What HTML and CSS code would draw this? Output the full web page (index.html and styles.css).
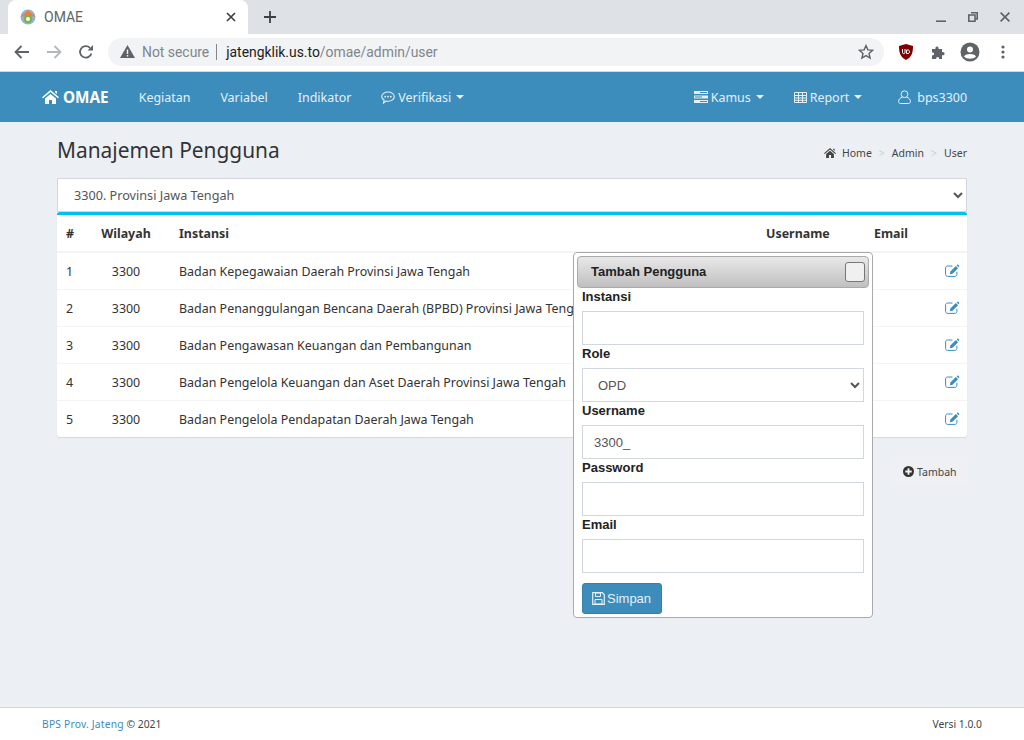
FILE: index.html
```html
<!DOCTYPE html>
<html lang="en">
<head>
    <meta charset="UTF-8">
    <meta name="viewport" content="width=device-width, initial-scale=1.0">
    <title>OMAE</title>
    <link rel="stylesheet" href="styles.css">
</head>
<body>
    <svg class="defs" width="0" height="0">
        <symbol id="i-edit" viewBox="0 0 15 13">
            <path d="M7.500 2H2.600C1.500 2 .6 2.800.6 3.900v6.500c0 1.100.9 2 2 2h7.300c1.100 0 2-.9 2-2V7.800" fill="none" stroke="currentColor" stroke-width="1"/>
            <path d="M5.400 7.600 10.900 2l2.200 2.200-5.600 5.500-2.700.6z" fill="currentColor"/>
            <path d="M11.600 1.300l.7-.6c.3-.2.600-.2.900 0l1 1c.2.300.2.600 0 .9l-.7.700z" fill="currentColor"/>
        </symbol>
        <symbol id="i-caret" viewBox="0 0 8 4">
            <path d="M0 0h8L4 4z" fill="currentColor"/>
        </symbol>
    </svg>

    <div class="tabstrip">
        <div class="tab">
            <svg class="favicon" width="16" height="16" viewBox="0 0 16 16">
                <circle cx="8" cy="8" r="7.500" fill="#8db4d8"/>
                <path d="M8 1 15 7.500H1z" fill="#e8813a"/>
                <circle cx="8" cy="10" r="4" fill="#7cb342"/>
                <circle cx="8" cy="10" r="2" fill="#fff"/>
            </svg>
            <span class="tab-title">OMAE</span>
            <svg class="tab-close" width="10" height="10" viewBox="0 0 10 10"><path d="M1 1l8 8M9 1 1 9" stroke="#3c4043" stroke-width="1.700"/></svg>
        </div>
        <svg class="new-tab" width="12" height="12" viewBox="0 0 12 12"><path d="M6 0v12M0 6h12" stroke="#3c4043" stroke-width="1.800"/></svg>
        <div class="window-btns">
            <svg width="10" height="10" viewBox="0 0 10 10"><path d="M0 9.200h10" stroke="#5f6368" stroke-width="1.600"/></svg>
            <svg width="10" height="10" viewBox="0 0 10 10"><path d="M3 .8h6.200V7H7M.8 3H7v6.200H.8z" fill="none" stroke="#5f6368" stroke-width="1.600"/></svg>
            <svg width="10" height="10" viewBox="0 0 10 10"><path d="M.6.6l8.800 8.800M9.400.6.6 9.400" stroke="#5f6368" stroke-width="1.600"/></svg>
        </div>
    </div>

    <div class="toolbar">
        <svg width="16" height="14" viewBox="0 0 16 14"><path d="M15 7H2M7.500 1 1.500 7l6 6" fill="none" stroke="#5f6368" stroke-width="1.800"/></svg>
        <svg width="16" height="14" viewBox="0 0 16 14"><path d="M1 7h13M8.500 1l6 6-6 6" fill="none" stroke="#b4b7bb" stroke-width="1.800"/></svg>
        <svg width="16" height="16" viewBox="0 0 16 16"><path d="M13.400 9.500A5.800 5.800 0 1 1 12 3.800" fill="none" stroke="#5f6368" stroke-width="1.800"/><path d="M9.500 6.500h5.500V1z" fill="#5f6368"/></svg>
        <div class="omnibox">
            <svg width="15" height="13" viewBox="0 0 15 13"><path d="M7.500 0 15 13H0z" fill="#5f6368"/><path d="M6.800 4.500h1.400v4.500H6.800zM6.800 10h1.400v1.400H6.800z" fill="#f1f3f4"/></svg>
            <span class="not-secure">Not secure</span>
            <span class="url"><b>jatengklik.us.to</b>/omae/admin/user</span>
            <svg class="star" width="16" height="16" viewBox="0 0 16 16"><path d="M8 1.600l1.900 4.300 4.700.4-3.600 3.100 1.100 4.600-4.100-2.400-4.100 2.400 1.100-4.600L1.400 6.300l4.700-.4z" fill="none" stroke="#5f6368" stroke-width="1.400"/></svg>
        </div>
        <svg class="ext-ublock" width="14" height="16" viewBox="0 0 14 16"><path d="M7 0l7 2c0 6-1 11-7 14C1 13 0 8 0 2z" fill="#800000"/><path d="M3.500 5v3.500c0 1.500 2.500 1.500 2.500 0V5M7.500 6h2c1.200 0 1.200 3.500 0 3.500h-2z" fill="none" stroke="#fff" stroke-width="1"/></svg>
        <svg class="ext-puzzle" width="16" height="16" viewBox="0 0 16 16"><path d="M1 5h3.500c-1-3.500 4-3.500 3 0H11v3.200c3.500-1 3.500 4 0 3V15H8c.8-2.800-3.500-2.800-2.700 0H1v-3.800c2.800.8 2.800-3.500 0-2.700z" fill="#5f6368"/></svg>
        <svg class="ext-avatar" width="20" height="20" viewBox="0 0 20 20"><circle cx="10" cy="10" r="9.500" fill="#5f6368"/><circle cx="10" cy="7.500" r="3" fill="#fff"/><path d="M4 14.500c2-3.200 10-3.200 12 0-2.500 3-9.500 3-12 0z" fill="#fff"/></svg>
        <svg class="ext-menu" width="4" height="14" viewBox="0 0 4 14"><circle cx="2" cy="2" r="1.600" fill="#5f6368"/><circle cx="2" cy="7" r="1.600" fill="#5f6368"/><circle cx="2" cy="12" r="1.600" fill="#5f6368"/></svg>
    </div>

    <nav class="navbar">
        <a class="brand" href="#">
            <svg width="17" height="14" viewBox="0 0 17 14"><path d="M8.500 0 17 7.200l-1 1.100-7.500-6.300L1 8.300 0 7.200zM13 1h2v3l-2-1.700zM3 8.500l5.500-4.600 5.500 4.600V14h-4v-4H7v4H3z" fill="currentColor"/></svg>
            OMAE
        </a>
        <a href="#">Kegiatan</a>
        <a href="#">Variabel</a>
        <a href="#">Indikator</a>
        <a href="#" class="nav-icon">
            <svg width="14" height="13" viewBox="0 0 14 13"><path d="M7 1c3.500 0 6.300 2 6.300 4.600S10.500 10.200 7 10.200c-.7 0-1.300-.1-1.900-.2L2.500 12l.6-3C1.500 8.100.7 7 .7 5.600.7 3 3.500 1 7 1z" fill="none" stroke="currentColor" stroke-width="1.100"/><circle cx="4.200" cy="5.700" r=".9" fill="currentColor"/><circle cx="7" cy="5.700" r=".9" fill="currentColor"/><circle cx="9.800" cy="5.700" r=".9" fill="currentColor"/></svg>
            Verifikasi
            <svg class="caret" width="8" height="4"><use href="#i-caret"/></svg>
        </a>
        <div class="nav-right">
            <a href="#" class="nav-icon">
                <svg width="14" height="12" viewBox="0 0 14 12"><path d="M0 0h14v3H0zM0 4.500h14v3H0zM0 9h14v3H0z" fill="currentColor"/><path d="M6 1.500h7M1 6h7M6 10.500h7" stroke="#3c8dbc" stroke-width="1"/></svg>
                Kamus
                <svg class="caret" width="8" height="4"><use href="#i-caret"/></svg>
            </a>
            <a href="#" class="nav-icon">
                <svg width="13" height="11" viewBox="0 0 13 11"><path d="M.5.500h12v10H.5zM.5 3.500h12M.5 6h12M.5 8.300h12M4.500.5v10M8.500.5v10" fill="none" stroke="currentColor" stroke-width="1"/></svg>
                Report
                <svg class="caret" width="8" height="4"><use href="#i-caret"/></svg>
            </a>
            <a href="#" class="nav-user">
                <svg width="13" height="14" viewBox="0 0 13 14"><circle cx="6.500" cy="4.200" r="3.400" fill="none" stroke="currentColor" stroke-width="1"/><path d="M4.300 7.200C2 7.800.6 9.500.6 11.500c0 1.200.8 2 2 2h7.800c1.200 0 2-.8 2-2 0-2-1.400-3.700-3.700-4.300" fill="none" stroke="currentColor" stroke-width="1"/></svg>
                bps3300
            </a>
        </div>
    </nav>

    <main class="content">
        <div class="page-head">
            <h1>Manajemen Pengguna</h1>
            <ol class="breadcrumb">
                <li class="crumb-home">
                    <svg width="12" height="10" viewBox="0 0 17 14"><path d="M8.500 0 17 7.200l-1 1.100-7.500-6.300L1 8.300 0 7.200zM13 1h2v3l-2-1.700zM3 8.500l5.500-4.600 5.500 4.600V14h-4v-4H7v4H3z" fill="#444"/></svg>
                    Home
                </li>
                <li class="sep">&gt;</li>
                <li>Admin</li>
                <li class="sep">&gt;</li>
                <li>User</li>
            </ol>
        </div>

        <select class="region-select">
            <option>3300. Provinsi Jawa Tengah</option>
        </select>

        <div class="box">
            <table>
                <colgroup>
                    <col class="c-no"><col class="c-wil"><col class="c-ins"><col class="c-usr"><col class="c-eml"><col class="c-act">
                </colgroup>
                <thead>
                    <tr>
                        <th>#</th>
                        <th class="center">Wilayah</th>
                        <th>Instansi</th>
                        <th>Username</th>
                        <th>Email</th>
                        <th></th>
                    </tr>
                </thead>
                <tbody>
                    <tr>
                        <td>1</td><td class="center">3300</td>
                        <td>Badan Kepegawaian Daerah Provinsi Jawa Tengah</td>
                        <td></td><td></td>
                        <td class="action"><svg class="edit" width="15" height="13"><use href="#i-edit"/></svg></td>
                    </tr>
                    <tr>
                        <td>2</td><td class="center">3300</td>
                        <td>Badan Penanggulangan Bencana Daerah (BPBD) Provinsi Jawa Tengah</td>
                        <td></td><td></td>
                        <td class="action"><svg class="edit" width="15" height="13"><use href="#i-edit"/></svg></td>
                    </tr>
                    <tr>
                        <td>3</td><td class="center">3300</td>
                        <td>Badan Pengawasan Keuangan dan Pembangunan</td>
                        <td></td><td></td>
                        <td class="action"><svg class="edit" width="15" height="13"><use href="#i-edit"/></svg></td>
                    </tr>
                    <tr>
                        <td>4</td><td class="center">3300</td>
                        <td>Badan Pengelola Keuangan dan Aset Daerah Provinsi Jawa Tengah</td>
                        <td></td><td></td>
                        <td class="action"><svg class="edit" width="15" height="13"><use href="#i-edit"/></svg></td>
                    </tr>
                    <tr>
                        <td>5</td><td class="center">3300</td>
                        <td>Badan Pengelola Pendapatan Daerah Jawa Tengah</td>
                        <td></td><td></td>
                        <td class="action"><svg class="edit" width="15" height="13"><use href="#i-edit"/></svg></td>
                    </tr>
                </tbody>
            </table>
        </div>

        <div class="box-actions">
            <button class="btn-add" type="button">
                <svg width="11" height="11" viewBox="0 0 12 12"><circle cx="6" cy="6" r="6" fill="#333"/><path d="M6 2.500v7M2.500 6h7" stroke="#f4f4f4" stroke-width="2"/></svg>
                Tambah
            </button>
        </div>
    </main>

    <footer class="footer">
        <span><a href="#">BPS Prov. Jateng</a> &copy; 2021</span>
        <span>Versi 1.0.0</span>
    </footer>

    <div class="dialog">
        <div class="dialog-title">
            <span>Tambah Pengguna</span>
            <button class="dialog-close" type="button"></button>
        </div>
        <form class="dialog-form">
            <label for="instansi">Instansi</label>
            <input type="text" id="instansi">

            <label for="role">Role</label>
            <select id="role"><option>OPD</option></select>

            <label for="username">Username</label>
            <input type="text" id="username" value="3300_">

            <label for="password">Password</label>
            <input type="text" id="password">

            <label for="email">Email</label>
            <input type="text" id="email">

            <button class="btn-save" type="button">
                <svg width="13" height="13" viewBox="0 0 13 13"><path d="M.7.700h9.500l2.100 2.100v9.500H.7z" fill="none" stroke="currentColor" stroke-width="1.200"/><path d="M3.500 1h5v3.500h-5zM3 7.500h7v4.500H3z" fill="none" stroke="currentColor" stroke-width="1"/></svg>
                Simpan
            </button>
        </form>
    </div>
</body>
</html>
```

FILE: styles.css
```css
* {
    box-sizing: border-box;
}
html, body {
    height: 100%;
}
body {
    margin: 0;
    display: flex;
    flex-direction: column;
    font-family: "Noto Sans", sans-serif;
    font-size: 12.44px;
    color: #333;
    background-color: #ecf0f5;
    overflow: hidden;
}
a {
    color: inherit;
    text-decoration: none;
}
.defs {
    position: absolute;
}

/* browser frame */
.tabstrip {
    height: 34px;
    display: flex;
    align-items: center;
    padding-left: 8px;
    background-color: #dee1e6;
    font-family: Roboto, sans-serif;
}
.tab {
    width: 240px;
    height: 34px;
    display: flex;
    align-items: center;
    padding: 0 12px;
    background: #fff;
    border-radius: 8px 8px 0 0;
}
.tab-title {
    flex: 1;
    margin-left: 8px;
    font-size: 14px;
    color: #5f6368;
}
.new-tab {
    margin-left: 16px;
}
.window-btns {
    margin-left: auto;
    display: flex;
    gap: 22px;
    padding-right: 14px;
}
.toolbar {
    height: 38px;
    display: flex;
    align-items: center;
    padding: 0 0 2px 14px;
    background: #fff;
    border-bottom: 1px solid #d0d8df;
    font-family: Roboto, sans-serif;
}
.toolbar > svg:nth-child(2) {
    margin-left: 16px;
}
.toolbar > svg:nth-child(3) {
    margin-left: 16px;
}
.omnibox {
    width: 776px;
    height: 28px;
    margin-left: 14px;
    display: flex;
    align-items: center;
    padding: 0 10px 0 12px;
    background: #f1f3f4;
    border-radius: 14px;
    font-size: 13.9px;
    color: #80868b;
}
.not-secure {
    margin-left: 7px;
    padding-right: 7px;
    border-right: 1px solid #80868b;
    line-height: 16px;
}
.url {
    margin-left: 9px;
}
.url b {
    font-weight: 400;
    color: #202124;
}
.star {
    margin-left: auto;
}
.ext-ublock {
    margin-left: 15px;
}
.ext-puzzle {
    margin-left: 18px;
}
.ext-avatar {
    margin-left: 13px;
}
.ext-menu {
    margin-left: 21px;
}

/* navbar */
.navbar {
    height: 50px;
    display: flex;
    align-items: center;
    padding: 0 57px 0 42px;
    gap: 30px;
    background-color: #3c8dbc;
    color: #e6f0f6;
}
.brand {
    display: flex;
    align-items: center;
    gap: 4px;
    font-size: 15.3px;
    font-weight: 700;
    color: #fff;
}
.nav-icon {
    display: flex;
    align-items: center;
    gap: 3px;
}
.caret {
    margin-left: 2px;
}
.nav-right {
    margin-left: auto;
    display: flex;
    align-items: center;
    gap: 30px;
}
.nav-user {
    display: flex;
    align-items: center;
    gap: 6px;
    margin-left: 6px;
}

/* page */
.content {
    flex: 1;
    padding: 0 57px;
}
.page-head {
    height: 56px;
    display: flex;
    align-items: center;
    justify-content: space-between;
    padding-bottom: 1px;
}
h1 {
    margin: 0;
    font-size: 20.9px;
    font-weight: 400;
    color: #333;
}
.breadcrumb {
    display: flex;
    align-items: center;
    gap: 7px;
    margin: 7px 0 0;
    padding: 0;
    list-style: none;
    font-size: 10.5px;
    color: #444;
}
.crumb-home {
    display: flex;
    align-items: center;
    gap: 6px;
}
.sep {
    color: #ccc;
}
.region-select {
    display: block;
    width: 100%;
    height: 34px;
    padding: 0 12px;
    border: 1px solid #d2d6de;
    border-radius: 0;
    background: #fff;
    font: inherit;
    font-size: 12.65px;
    color: #555;
}
.box {
    border-top: 3px solid #00c0ef;
    border-radius: 3px;
    background: #fff;
    box-shadow: 0 1px 1px rgba(0, 0, 0, 0.1);
}
table {
    width: 100%;
    table-layout: fixed;
    border-collapse: collapse;
}
.c-no { width: 24px; }
.c-wil { width: 90px; }
.c-usr { width: 108px; }
.c-eml { width: 71px; }
.c-act { width: 30px; }
th, td {
    padding: 0 8px;
    text-align: left;
    white-space: nowrap;
    overflow: hidden;
}
th {
    height: 37px;
    font-weight: 700;
    border-bottom: 2px solid #f4f4f4;
}
td {
    height: 37px;
    padding-top: 2px;
    border-top: 1px solid #f4f4f4;
}
tbody tr:first-child td {
    border-top: 0;
}
th:first-child, td:first-child {
    padding-left: 9px;
    padding-right: 0;
}
.center {
    text-align: center;
}
.action {
    padding: 0;
}
.edit {
    display: block;
    margin-left: 8px;
    color: #3c8dbc;
}
.box-actions {
    display: flex;
    justify-content: flex-end;
    margin-top: 20px;
}
.btn-add {
    height: 29px;
    width: 75px;
    display: flex;
    align-items: center;
    gap: 3px;
    padding: 0 0 0 11px;
    border: 0;
    border-radius: 3px;
    background: #eef0f3;
    font: inherit;
    font-size: 10.5px;
    color: #444;
}

/* footer */
.footer {
    height: 33px;
    display: flex;
    align-items: center;
    justify-content: space-between;
    padding: 0 42px;
    background: #fff;
    border-top: 1px solid #d2d6de;
    font-size: 10.3px;
    color: #444;
}
.footer a {
    color: #3c8dbc;
    letter-spacing: 0.2px;
}

/* dialog */
.dialog {
    position: absolute;
    left: 573px;
    top: 252px;
    width: 300px;
    height: 366px;
    padding: 3px;
    background: #fff;
    border: 1px solid #aaa;
    border-radius: 4px;
    font-family: "Liberation Sans", Arial, sans-serif;
    font-size: 13px;
    color: #222;
}
.dialog-title {
    height: 32px;
    display: flex;
    align-items: center;
    justify-content: space-between;
    padding: 0 3px 2px 13px;
    background: linear-gradient(#e8e8e8, #c0c0c0);
    border: 1px solid #aaa;
    border-radius: 4px;
    font-weight: 700;
}
.dialog-close {
    width: 20px;
    height: 20px;
    margin-top: 2px;
    padding: 0;
    background: #f0f0f0;
    border: 1px solid #777;
    border-radius: 3px;
}
.dialog-form {
    padding: 0 5px;
}
.dialog-form label {
    display: block;
    height: 23px;
    padding-top: 1px;
    line-height: 15px;
    font-weight: 700;
}
.dialog-form input, .dialog-form select {
    display: block;
    width: 282px;
    height: 34px;
    padding: 0 11px;
    border: 1px solid #d2d6de;
    border-radius: 0;
    background: #fff;
    font: inherit;
    color: #555;
}
.btn-save {
    height: 31px;
    width: 80px;
    margin-top: 10px;
    display: flex;
    align-items: center;
    gap: 2px;
    padding: 0 0 0 9px;
    background: #3c8dbc;
    border: 1px solid #367fa9;
    border-radius: 3px;
    font: inherit;
    color: #e6f0f6;
}
```
